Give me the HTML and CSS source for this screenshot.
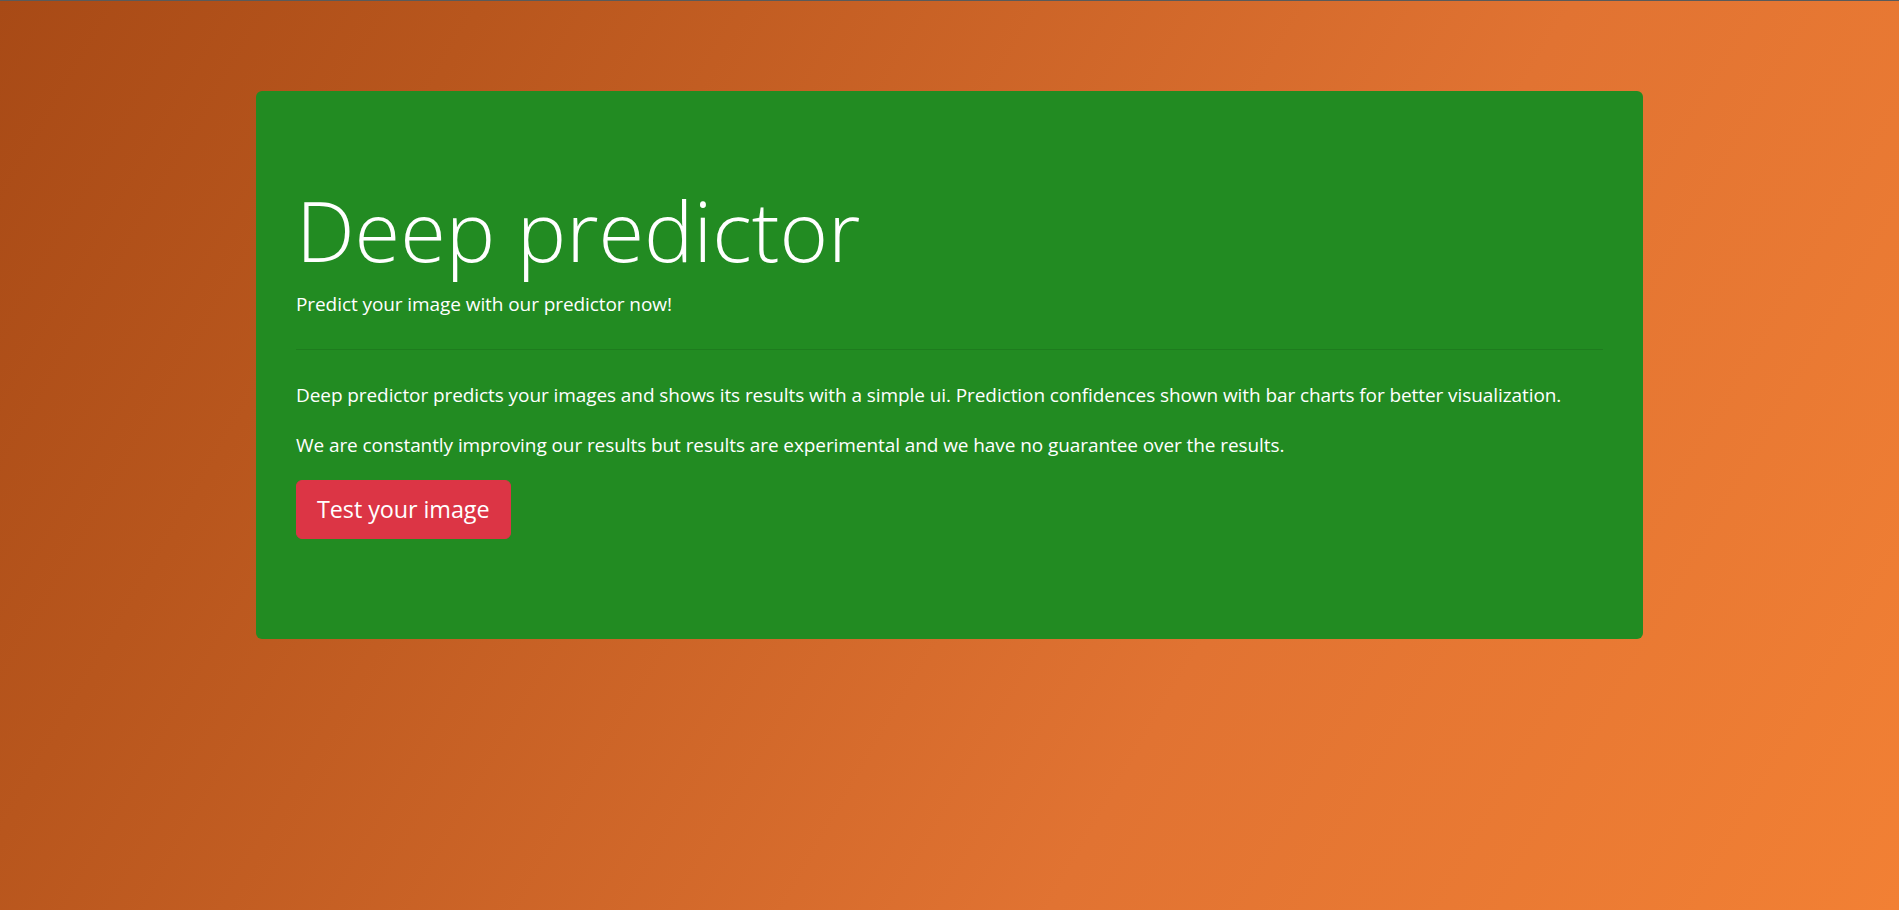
FILE: index.html
```html
<!DOCTYPE html>
<html lang="en">
<head>
<meta charset="utf-8">
<title>Deep predictor</title>
<link rel="stylesheet" href="styles.css">
</head>
<body>
<div class="page">
  <main class="container">
    <section class="jumbotron">
      <h1 class="display">Deep predictor</h1>
      <p class="text">Predict your image with our predictor now!</p>
      <hr class="divider">
      <p class="text">Deep predictor predicts your images and shows its results with a simple ui. Prediction confidences shown with bar charts for better visualization.</p>
      <p class="text">We are constantly improving our results but results are experimental and we have no guarantee over the results.</p>
      <p class="text"><a class="btn" href="#">Test your image</a></p>
    </section>
  </main>
</div>
</body>
</html>
```
FILE: styles.css
```css
html, body {
  margin: 0;
  padding: 0;
}
body {
  font-family: "Open Sans", "Noto Sans", sans-serif;
  color: #fff;
  background: linear-gradient(120deg, #a84a16 0%, #b8561d 20%, #e17332 65%, #f28034 100%);
  min-height: 910px;
}
.page {
  border-top: 1px solid #5a5a5a;
  min-height: 909px;
  box-sizing: border-box;
  padding-top: 90px;
}
.container {
  width: 1387px;
  margin: 0 auto;
}
.jumbotron {
  background: #228b22;
  border-radius: 6px;
  padding: 80px 40px;
}
.display {
  font-size: 83px;
  font-weight: 300;
  line-height: 108px;
  padding-top: 5px;
  margin: 0 0 5px;
}
.text {
  font-size: 19px;
  letter-spacing: -0.08px;
  line-height: 30px;
  margin: 0 0 20px;
}
.divider {
  border: 0;
  border-top: 1px solid rgba(0, 0, 0, 0.1);
  margin: 30px 0;
}
.btn {
  display: inline-block;
  vertical-align: top;
  background: #dc3545;
  border: 1px solid #dc3545;
  color: #fff;
  text-decoration: none;
  font-size: 23.4px;
  line-height: 37px;
  padding: 10px 20px;
  border-radius: 6px;
}
```
